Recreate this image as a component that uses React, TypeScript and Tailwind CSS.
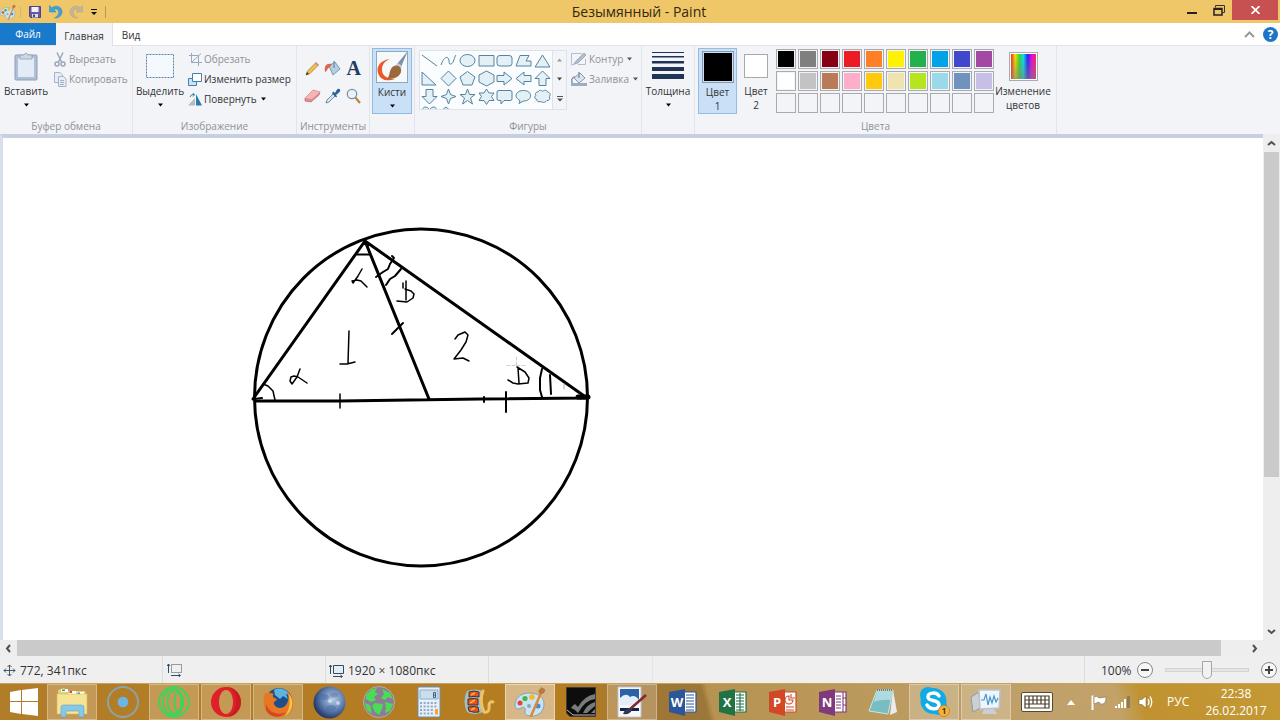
import React, { useState } from 'react'

const palette = [
  '#000000', '#7f7f7f', '#880015', '#ed1c24', '#ff7f27', '#fff200', '#22b14c', '#00a2e8', '#3f48cc', '#a349a4',
  '#ffffff', '#c3c3c3', '#b97a57', '#ffaec9', '#ffc90e', '#efe4b0', '#b5e61d', '#99d9ea', '#7092be', '#c8bfe7',
  '', '', '', '', '', '', '', '', '', '',
]

// 19x19 outlines of the shape gallery
const shapes = [
  { name: 'Линия', d: 'M2 4L17 15' },
  { name: 'Кривая', d: 'M2 14C4 8 7 5 9 7C11 9 9 14 12 13C15 12 15 6 17 4' },
  { name: 'Овал', d: 'M2 9.5a7.5 6 0 1 0 15 0a7.5 6 0 1 0 -15 0Z' },
  { name: 'Прямоугольник', d: 'M2 4.5H17V15H2Z' },
  { name: 'Скругленный прямоугольник', d: 'M5 4.5H14Q17 4.5 17 7V12.500Q17 15 14 15H5Q2 15 2 12.500V7Q2 4.500 5 4.500Z' },
  { name: 'Многоугольник', d: 'M6 4.500H15L12 10H17V15H2Z' },
  { name: 'Треугольник', d: 'M9.500 4L17 16H2Z' },
  { name: 'Прямоугольный треугольник', d: 'M2 3V16H16Z' },
  { name: 'Ромб', d: 'M9.500 2L17 9.500L9.500 17L2 9.500Z' },
  { name: 'Пятиугольник', d: 'M9.500 2.500L17 8L14 16H5L2 8Z' },
  { name: 'Шестиугольник', d: 'M9.500 2L17 6V13L9.500 17L2 13V6Z' },
  { name: 'Стрелка вправо', d: 'M2 6.500H9V3L17 9.500L9 16V12.500H2Z' },
  { name: 'Стрелка влево', d: 'M17 6.500H10V3L2 9.500L10 16V12.500H17Z' },
  { name: 'Стрелка вверх', d: 'M9.500 2L17 9.500H13V16.500H6V9.500H2Z' },
  { name: 'Стрелка вниз', d: 'M9.500 17L17 9.500H13V2.500H6V9.500H2Z' },
  { name: 'Четырехконечная звезда', d: 'M9.500 2L11.500 7.500L17 9.500L11.500 11.500L9.500 17L7.500 11.500L2 9.500L7.500 7.500Z' },
  { name: 'Пятиконечная звезда', d: 'M9.500 2L11.500 7.500H17L12.500 11L14.500 17L9.500 13.500L4.500 17L6.500 11L2 7.500H7.500Z' },
  { name: 'Шестиконечная звезда', d: 'M9.500 2L12 6H17L14.500 9.500L17 13.500H12L9.500 17.500L7 13.500H2L4.500 9.500L2 6H7Z' },
  { name: 'Выноска', d: 'M4 3.500H15Q17 3.500 17 5V12Q17 13.500 15 13.500H9L6 17V13.500H4Q2 13.500 2 12V5Q2 3.500 4 3.500Z' },
  { name: 'Овальная выноска', d: 'M9.500 3.500C19 3.500 19 14 9.500 14L5 16.500L6 13.500C-1 10 2 3.500 9.500 3.500Z' },
  { name: 'Выноска-облако', d: 'M5 5C6 2.500 9 3 9.500 4.500C11 2.500 14 3 14.500 5C17.500 5.500 17.500 8 16.500 9.500C17.500 12 16 14 14 13.500C12 16 9 15.500 8 14.500C5 15.500 3.500 14 4 12.500C1 12 1.500 9 3 8.500C1.500 6.500 3 5 5 5Z' },
  { name: 'Сердце', d: 'M9.500 5C7 0 2 2 2 6C2 11 9.500 17 9.500 17S17 11 17 6C17 2 12 0 9.500 5Z' },
  { name: 'Молния', d: 'M7 2L13 7L11 8L17 17L8 11L10 10L2 6Z' },
]

function Caret({ className = 'fill-black' }: { className?: string }) {
  return (
    <svg className={className} width="5" height="4" viewBox="0 0 5 4"><path d="M0 0.500H5L2.500 3.500Z" /></svg>
  )
}

function Group({ label, className, children }: { label: string; className: string; children: React.ReactNode }) {
  return (
    <section aria-label={label} className={`flex shrink-0 flex-col border-r border-[#e2e5ea] ${className}`}>
      <div className="flex h-[73px] pt-[2px]">{children}</div>
      <div className="text-center leading-4 text-[#8f9296]">{label}</div>
    </section>
  )
}

interface BigProps {
  icon: React.ReactNode
  text: string
  second?: string
  className: string
}

function BigButton({ icon, text, second, className }: BigProps) {
  return (
    <button className={`flex h-[66px] shrink-0 flex-col items-center whitespace-nowrap leading-[14px] ${className}`}>
      <span className="flex h-9 items-center justify-center">{icon}</span>
      <span>{text}</span>
      <span className="flex h-[14px] items-center">{second ? second : <Caret />}</span>
    </button>
  )
}

function SmallButton({ icon, text, caret, disabled }: { icon: React.ReactNode; text: string; caret?: boolean; disabled?: boolean }) {
  return (
    <button
      disabled={disabled}
      className={disabled ? 'flex h-5 items-center gap-[2px] whitespace-nowrap text-[#8f9296]' : 'flex h-5 items-center gap-[2px] whitespace-nowrap'}
    >
      {icon}
      <span>{text}</span>
      {caret && <Caret className={disabled ? 'ml-[2px] fill-[#50545a]' : 'ml-[2px] fill-black'} />}
    </button>
  )
}

function PaletteIcon({ size }: { size: number }) {
  return (
    <svg width={size} height={size} viewBox="0 0 32 32">
      <path d="M15 7C6 7 1 13 1 19C1 23 4 24 7 22C10 20 12 22 11 25C10 29 14 30 18 30C25 30 30 25 30 18C30 11 24 7 15 7Z" fill="#c9e3f0" stroke="#7da6ba" />
      <circle cx="6" cy="17" r="2.500" fill="#e0453c" />
      <circle cx="11" cy="12.500" r="2.600" fill="#45b64b" />
      <circle cx="18" cy="11" r="2.800" fill="#f6b826" />
      <circle cx="15" cy="20" r="2" fill="#8aa7b5" />
      <circle cx="24" cy="20" r="2.500" fill="#4c86d6" />
      <path d="M27 7L17 30" stroke="#d88a3c" strokeWidth="2.500" strokeLinecap="round" />
      <path d="M25 7C23 3 27 4 27 1C29 3 32 2 31 5C30 8 28 9 25 7Z" fill="#b77b42" />
    </svg>
  )
}

function TitleBar() {
  return (
    <header className="flex h-[23px] shrink-0 bg-[#efc768]">
      <div className="flex flex-1 items-center">
        <PaletteIcon size={16} />
        <span className="ml-1 mr-2 h-3 w-px bg-[#d3b774]"></span>
        <button aria-label="Сохранить" className="mr-2">
          <svg width="12" height="12" viewBox="0 0 12 12">
            <path d="M0.500 0.500H11.500V11.500H1.500L0.500 10.500Z" fill="#6a58a5" stroke="#51418a" />
            <path d="M2.500 1H9.500V6H2.500Z" fill="#f4f3fa" />
            <path d="M3 8H9V11.500H3Z" fill="#ddd" />
            <path d="M4 8.500H6V11H4Z" fill="#51418a" />
          </svg>
        </button>
        <button aria-label="Отменить" className="mr-[6px]">
          <svg width="14" height="14" viewBox="0 0 14 14">
            <path d="M0.500 0.500V7H7L4.800 4.800C8 2.800 10.500 5.500 9.500 8.500C9 10.500 7.500 12 5.500 13C10 13.500 13.500 10 13 6C12.400 1.500 7 -0.500 2.800 2.800Z" fill="#3ea3d6" stroke="#2b87bd" strokeWidth=".5" />
          </svg>
        </button>
        <button aria-label="Вернуть" className="mr-2">
          <svg width="14" height="14" viewBox="0 0 14 14">
            <path d="M13.500 0.500V7H7L9.200 4.800C6 2.800 3.500 5.500 4.500 8.500C5 10.500 6.500 12 8.500 13C4 13.500 0.500 10 1 6C1.600 1.500 7 -0.500 11.200 2.800Z" fill="#c3b596" stroke="#aaa18c" strokeWidth=".5" />
          </svg>
        </button>
        <button aria-label="Настройка панели" className="mr-2">
          <svg width="6" height="6" viewBox="0 0 6 6"><path d="M0 0H6V1H0ZM0 3H6L3 6Z" fill="#111" /></svg>
        </button>
        <span className="h-3 w-px bg-[#b59a5c]"></span>
      </div>
      <h1 className="text-[14px] leading-6 text-[#33290f]">Безымянный - Paint</h1>
      <div className="flex flex-1 items-start justify-end pr-[2px]">
        <button aria-label="Свернуть" className="flex h-5 w-[26px] items-center justify-center">
          <svg width="10" height="10" viewBox="0 0 10 10"><path d="M0 7H10V9H0Z" fill="#222" /></svg>
        </button>
        <button aria-label="Развернуть" className="flex h-5 w-[27px] items-center justify-center">
          <svg width="12" height="11" viewBox="0 0 12 11">
            <path d="M2.500 2.500V0.500H11.500V7.500H9.500" fill="none" stroke="#333" />
            <path d="M1 3.500H9V10H1Z" fill="none" stroke="#222" strokeWidth="1.500" />
            <path d="M1 3H9V5H1Z" fill="#222" />
          </svg>
        </button>
        <button aria-label="Закрыть" className="flex h-5 w-[46px] items-center justify-center bg-[#c75050]">
          <svg width="9" height="8" viewBox="0 0 9 8"><path d="M0.500 0L8.500 8M8.500 0L0.500 8" stroke="#fff" strokeWidth="1.700" /></svg>
        </button>
      </div>
    </header>
  )
}

function Tabs() {
  return (
    <nav className="flex h-[22px] shrink-0 bg-white text-[10px] text-[#333]">
      <button className="w-14 bg-[#1979ca] text-white">Файл</button>
      <button className="z-10 -mb-px w-[57px] border-r border-[#dfe2e7] bg-[#f2f4f8] pt-[3px]">Главная</button>
      <button className="w-9 pt-[3px]">Вид</button>
      <div className="flex flex-1 items-center justify-end gap-2 pr-[2px]">
        <button aria-label="Свернуть ленту">
          <svg width="11" height="7" viewBox="0 0 11 7"><path d="M1 6L5.500 1.500L10 6" fill="none" stroke="#999" strokeWidth="2" /></svg>
        </button>
        <button aria-label="Справка" className="size-[15px] rounded-full bg-[#1c75c8] text-[12px] font-bold leading-[15px] text-white">?</button>
      </div>
    </nav>
  )
}

function Ribbon() {
  const [color, setColor] = useState('#000000')

  return (
    <div className="flex h-[89px] shrink-0 overflow-hidden border-t border-[#e0e3e8] bg-[#f2f4f8] text-[10px] text-[#333]">
      <Group label="Буфер обмена" className="w-[133px]">
        <BigButton
          className="ml-1 w-11"
          text="Вставить"
          icon={
            <svg width="24" height="29" viewBox="0 0 24 29">
              <rect x="1" y="3" width="22" height="25" rx="1" fill="#b1bfd6" stroke="#8f9fba" />
              <path d="M4 6H20V25H4Z" fill="#e3ebf6" />
              <path d="M6 3H10Q12 -1 14 3H18V7H6Z" fill="#d0d7e2" stroke="#8f9fba" strokeWidth=".8" />
            </svg>
          }
        />
        <div className="ml-[5px] pt-px">
          <SmallButton
            disabled
            text="Вырезать"
            icon={
              <svg width="14" height="15" viewBox="0 0 14 15" fill="none" stroke="#9aa5b7" strokeWidth="1.400">
                <path d="M4 0.500L8.500 10M10 0.500L5.500 10" /><circle cx="4" cy="12" r="2" /><circle cx="10" cy="12" r="2" />
              </svg>
            }
          />
          <SmallButton
            disabled
            text="Копировать"
            icon={
              <svg width="14" height="15" viewBox="0 0 14 15" fill="#e6edf8" stroke="#a5b3ca">
                <path d="M1.500 0.500H7L9.500 3V10.500H1.500Z" /><path d="M5.500 4.500H10.500L13 7V14.500H5.500Z" /><path d="M7 8.500H11M7 10.500H11M7 12.500H11" />
              </svg>
            }
          />
        </div>
      </Group>

      <Group label="Изображение" className="w-[164px]">
        <BigButton
          className="ml-1 w-[46px]"
          text="Выделить"
          icon={
            <svg width="28" height="24" viewBox="0 0 28 24"><rect x="0.500" y="0.500" width="27" height="23" fill="#f5f8fc" stroke="#5783a8" strokeDasharray="2 1" /></svg>
          }
        />
        <div className="ml-[5px] pt-px">
          <SmallButton
            disabled
            text="Обрезать"
            icon={
              <svg width="14" height="13" viewBox="0 0 14 13" fill="none" stroke="#9ba9bd"><path d="M3.500 0V9.500H14M1 2.500H10.500V13M3.500 9.500L13 0.500" /></svg>
            }
          />
          <SmallButton
            text="Изменить размер"
            icon={
              <svg width="14" height="13" viewBox="0 0 14 13"><path d="M0.500 5.500H8.500V12.500H0.500Z" fill="#cce2f1" stroke="#3e83ad" /><path d="M4.500 0.500H13.500V8.500H4.500Z" fill="#fff" stroke="#3e83ad" /></svg>
            }
          />
          <SmallButton
            text="Повернуть"
            caret
            icon={
              <svg width="14" height="13" viewBox="0 0 14 13"><path d="M0 12.500L7 5V12.500Z" fill="#b5bbc2" /><path d="M8 1V12.500H14Z" fill="#287cae" /><path d="M2 4Q3 1 6 1.500M4.500 0L6.500 1.500L5 3.500" fill="none" stroke="#287cae" /></svg>
            }
          />
        </div>
      </Group>

      <Group label="Инструменты" className="w-[73px]">
        <div className="ml-[5px] grid h-14 w-[62px] grid-cols-3 place-items-center">
          <button aria-label="Карандаш" className="pt-[10px]">
            <svg width="15" height="15" viewBox="0 0 15 15"><path d="M1 14L2.500 10L11 1.500L13.500 4L5 12.500Z" fill="#edc34f" stroke="#9b7730" strokeWidth=".7" /><path d="M11 1.500L13.500 4L12.500 5L10 2.500Z" fill="#d78688" /><path d="M1 14L2 11L4 13Z" fill="#333" /></svg>
          </button>
          <button aria-label="Заливка цветом" className="pt-[10px]">
            <svg width="17" height="16" viewBox="0 0 17 16"><path d="M5 6L11 2L16 9L9 15Z" fill="#b7d0e1" stroke="#6188a4" strokeWidth=".8" /><path d="M10 1V8" stroke="#517c9c" /><path d="M8 4C2 3 0 6 1 12C3 12 3 8 6 7Z" fill="#dd6747" /></svg>
          </button>
          <button aria-label="Текст" className="pt-[10px] font-['Liberation_Serif',serif] text-[20px] font-bold leading-5 text-[#1f3b61]">A</button>
          <button aria-label="Ластик" className="pt-[10px]">
            <svg width="17" height="14" viewBox="0 0 17 14"><path d="M1 9L9 1L16 3L15 6L7 13L1 12Z" fill="#dd8d8e" stroke="#b46c70" strokeWidth=".7" /><path d="M1 9L9 1L16 3L8 10Z" fill="#f5b5b2" /></svg>
          </button>
          <button aria-label="Палитра" className="pt-[10px]">
            <svg width="16" height="16" viewBox="0 0 16 16"><path d="M1 15L2 12L8 6L10 8L4 14Z" fill="#d7e7f2" stroke="#54738d" strokeWidth=".8" /><path d="M7 5L8.500 3.500L10 5L12 1.500Q14 0 15 1.500Q16 3 14 4.500L11 7L12 8.500L11 9.500Z" fill="#28629b" /></svg>
          </button>
          <button aria-label="Масштаб" className="pt-[10px]">
            <svg width="15" height="16" viewBox="0 0 15 16"><path d="M9 9L14 15" stroke="#b7863f" strokeWidth="2.200" /><circle cx="6" cy="6" r="4.700" fill="#e9f3fa" stroke="#7e8fa1" strokeWidth="1.300" /></svg>
          </button>
        </div>
      </Group>

      <section className="w-[45px] shrink-0 border-r border-[#e2e5ea] pl-[2px] pt-[2px]">
        <BigButton
          className="w-10 border border-[#8fbbe4] bg-[#c9e0f7]"
          text="Кисти"
          icon={
            <svg width="32" height="32" viewBox="0 0 32 32">
              <rect x="0.500" y="0.500" width="31" height="31" fill="#f7f8fa" stroke="#8ea8c1" />
              <path d="M14 8C5 9 0 15 2 22C4 29 11 31 19 28C12 28 6 25 6 19C6 13 9 10 14 8Z" fill="#e9592a" />
              <path d="M31 2L25 16L21 13L31 1Z" fill="#7b93ad" />
              <path d="M22 12L26 15L24 19L19 15Z" fill="#c3ccd4" />
              <path d="M15 18C18 13 24 14 25 18C26 23 22 28 11 28C14 25 13 21 15 18Z" fill="#9a6a3a" />
            </svg>
          }
        />
      </section>

      <Group label="Фигуры" className="w-[227px]">
        <div className="ml-1 mt-[2px] grid h-[60px] w-[134px] shrink-0 auto-rows-[18px] grid-cols-7 overflow-hidden border border-[#dde3ea] bg-[#fafcfe]">
          {shapes.map((s) => (
            <button key={s.name} aria-label={s.name}>
              <svg width="19" height="19" viewBox="0 0 19 19"><path d={s.d} fill={s.name === 'Кривая' ? 'none' : '#e3f1f7'} stroke="#5583a0" /></svg>
            </button>
          ))}
        </div>
        <div className="mt-[2px] flex h-[60px] w-[14px] flex-col items-center justify-around border border-l-0 border-[#dde3ea]">
          <svg width="5" height="4" viewBox="0 0 5 4"><path d="M0 3.500H5L2.500 0.500Z" fill="#999" /></svg>
          <Caret className="fill-[#444]" />
          <svg width="6" height="6" viewBox="0 0 6 6"><path d="M0 0H6V1H0ZM0 2.500H6L3 5.500Z" fill="#555" /></svg>
        </div>
        <div className="ml-1 pt-px">
          <SmallButton
            disabled
            text="Контур"
            caret
            icon={
              <svg width="16" height="14" viewBox="0 0 16 14"><path d="M11 1.500H0.500V13L4 12M14.500 7V12.500H7" fill="none" stroke="#b2bfd2" /><path d="M3 12L5 9L13 1L15 3L7 11Z" fill="#b4c0d2" stroke="#8796ad" strokeWidth=".7" /></svg>
            }
          />
          <SmallButton
            disabled
            text="Заливка"
            caret
            icon={
              <svg width="16" height="14" viewBox="0 0 16 14"><path d="M0 11H16V14H0Z" fill="#9eacc3" /><path d="M3 6L9 1L14 6L8 11Z" fill="#dbe3ef" stroke="#8796ad" /><path d="M8 0V6M4 5Q0 5 1 11" fill="none" stroke="#8796ad" strokeWidth="1.500" /></svg>
            }
          />
        </div>
      </Group>

      <section className="flex w-[53px] shrink-0 justify-center border-r border-[#e2e5ea] pt-[2px]">
        <BigButton
          className="w-11"
          text="Толщина"
          icon={
            <svg width="32" height="28" viewBox="0 0 32 28"><path d="M0 0H32V1H0ZM0 4H32V5.500H0ZM0 9H32V11.500H0ZM0 15H32V19H0ZM0 22H32V27H0Z" fill="#203556" /></svg>
          }
        />
      </section>

      <Group label="Цвета" className="w-[362px]">
        <BigButton
          className="ml-[3px] w-[39px] border border-[#94bde5] bg-[#c9e0f7]"
          text="Цвет"
          second="1"
          icon={<span className="size-8 border border-[#8b97a5] p-px"><span className="block size-7" style={{ backgroundColor: color }}></span></span>}
        />
        <BigButton
          className="w-[38px]"
          text="Цвет"
          second="2"
          icon={<span className="size-6 border border-[#a8a8a8] bg-white"></span>}
        />
        <div className="ml-px grid shrink-0 grid-cols-10 content-start gap-[2px] pt-px">
          {palette.map((c, i) => (
            <button
              key={i}
              aria-label={`Цвет ${i + 1}`}
              onClick={() => c && setColor(c)}
              className="size-5 border border-[#a9abae] p-px"
            >
              <span className="block h-full" style={{ backgroundColor: c || 'transparent' }}></span>
            </button>
          ))}
        </div>
        <BigButton
          className="w-[58px]"
          text="Изменение"
          second="цветов"
          icon={
            <span className="size-[29px] border border-[#aaa] bg-white p-px">
              <span className="block h-full bg-[linear-gradient(to_top,#80808099,transparent),linear-gradient(to_right,#f22,#fd0,#3d2,#0df,#22e,#e0e,#f24)]"></span>
            </span>
          }
        />
      </Group>
    </div>
  )
}

function Drawing() {
  return (
    <svg className="block h-full w-full" role="img" aria-label="Окружность с вписанным треугольником">
      <g transform="translate(-3 -138)" fill="none" stroke="#000" strokeWidth="1.500" strokeLinecap="round" strokeLinejoin="round">
        <ellipse cx="421" cy="397.500" rx="166.500" ry="168.500" strokeWidth="3" />
        <path strokeWidth="3" d="M253 399L365 241L587 398M365 241L429 399M256 401L340 401L480 399L587 398" />
        <path strokeWidth="5" d="M578 397L588 397" />
        <path strokeWidth="2" d="M253 399L262 398M357 254.500H370" />
        <path d="M362 269L358 276L353 283L352 281L357 280L361 281L367 287" />
        <path strokeWidth="2" d="M392 256L394 258L390 264L388 269L383 272L376 277M401 269L395 276L390 279L386 285" />
        <path d="M403 283V288M406 281L406 300M397 301L407 302L413 298L414 294L411 291L405 289" />
        <path strokeWidth="2" d="M403 323L392 334" />
        <path d="M349 331L348 363M340 364L347 364L355 362" />
        <path d="M300 369L297 377L292 384L290 381L291 377L294 376L298 377L307 383" />
        <path d="M263 384L268 386L273 391L275 400M340 394V408" />
        <path d="M455 339L458 335L465 332L468 335L466 342L461 350L454 359L463 358L469 361" />
        <path d="M518 368L519 383M517 367L525 372L529 378L528 383L518 384L513 383L508 380" />
        <path strokeWidth="2" d="M542 369L540 378L540 390L542 397M550 375L551 394M484 397V402M506 392V412" />
        <path strokeWidth="1" stroke="#aaa" d="M564 384V389" />
        <path strokeWidth="1" stroke="#ccc" strokeDasharray="3 2" d="M507 365.500H527M516.500 357V366" />
      </g>
    </svg>
  )
}

function Chevron({ d }: { d: string }) {
  return (
    <svg width="9" height="9" viewBox="0 0 9 9"><path d={d} fill="none" stroke="#505050" strokeWidth="2" /></svg>
  )
}

function Workspace() {
  return (
    <div className="flex min-h-0 flex-1">
      <main className="flex min-w-0 flex-1 flex-col">
        <div className="min-h-0 flex-1 border-l-[3px] border-t-4 border-l-[#d7dfec] border-t-[#c8d0df] bg-white">
          <Drawing />
        </div>
        <div className="flex h-4 bg-[#eee]">
          <button aria-label="Влево" className="flex w-[17px] items-center justify-center"><Chevron d="M6 1L3 4.500L6 8" /></button>
          <div className="flex flex-1"><div className="w-[98%] bg-[#cacaca]"></div></div>
          <button aria-label="Вправо" className="flex w-[17px] items-center justify-center"><Chevron d="M3 1L6 4.500L3 8" /></button>
        </div>
      </main>
      <div className="flex w-[17px] flex-col bg-[#eee] pb-4">
        <button aria-label="Вверх" className="flex h-[18px] items-center justify-center"><Chevron d="M1 6L4.500 3L8 6" /></button>
        <div className="flex-1 px-px"><div className="h-[69%] bg-[#cacaca]"></div></div>
        <button aria-label="Вниз" className="flex h-[17px] items-center justify-center"><Chevron d="M1 3L4.500 6L8 3" /></button>
      </div>
    </div>
  )
}

function StatusBar() {
  const [zoom, setZoom] = useState(50)

  return (
    <footer className="flex h-[27px] shrink-0 bg-[#efefef] text-[12px] text-[#333]">
      <div className="flex w-[163px] items-center gap-1 border-r border-[#ddd] pl-[3px] pt-[2px]">
        <svg width="13" height="13" viewBox="0 0 13 13" fill="none" stroke="#44586b"><path d="M6.500 1V12M1 6.500H12M4.500 3L6.500 1L8.500 3M4.500 10L6.500 12L8.500 10M3 4.500L1 6.500L3 8.500M10 4.500L12 6.500L10 8.500" /></svg>
        <span>772, 341пкс</span>
      </div>
      <div className="flex w-[163px] items-center border-r border-[#ddd] pl-1">
        <svg width="15" height="14" viewBox="0 0 15 14" fill="none" stroke="#354a63"><path d="M1.500 1V10M0 3L1.500 1L3 3M4 12.500H13M11.500 11L13.500 12.500L11.500 14" /><path strokeDasharray="1 1" d="M4.500 1.500H14.500V9.500H4.500Z" /></svg>
      </div>
      <div className="flex w-[163px] items-center gap-1 border-r border-[#ddd] pl-[3px] pt-[2px]">
        <svg width="15" height="14" viewBox="0 0 15 14" fill="none" stroke="#354a63"><path d="M1.500 1V10M0 3L1.500 1L3 3M4 12.500H13M11.500 11L13.500 12.500L11.500 14" /><path fill="#e3edf7" d="M4.500 1.500H14.500V9.500H4.500Z" /></svg>
        <span>1920 × 1080пкс</span>
      </div>
      <div className="w-[164px] border-r border-[#e4e4e4]"></div>
      <div className="flex-1"></div>
      <div className="flex w-[196px] items-center border-l border-[#ddd] pl-4">
        <label htmlFor="zoom" className="w-9 pt-[2px]">100%</label>
        <button aria-label="Уменьшить" onClick={() => setZoom(Math.max(0, zoom - 10))} className="flex size-4 items-center justify-center rounded-full border border-[#888] bg-[#f7f7f7]">
          <svg width="8" height="8" viewBox="0 0 8 8"><path d="M0 4H8" stroke="#444" strokeWidth="2" /></svg>
        </button>
        <input
          id="zoom"
          type="range"
          value={zoom}
          onChange={(e) => setZoom(Number(e.target.value))}
          className="mx-3 h-1 w-[84px] appearance-none border border-[#d3d3d3] bg-[#e6e6e6] [&::-webkit-slider-thumb]:h-[18px] [&::-webkit-slider-thumb]:w-[10px] [&::-webkit-slider-thumb]:appearance-none [&::-webkit-slider-thumb]:rounded-b-md [&::-webkit-slider-thumb]:border [&::-webkit-slider-thumb]:border-[#a5a5a5] [&::-webkit-slider-thumb]:bg-[#f2f2f2]"
        />
        <button aria-label="Увеличить" onClick={() => setZoom(Math.min(100, zoom + 10))} className="flex size-4 items-center justify-center rounded-full border border-[#888] bg-[#f7f7f7]">
          <svg width="8" height="8" viewBox="0 0 8 8"><path d="M0 4H8M4 0V8" stroke="#444" strokeWidth="2" /></svg>
        </button>
      </div>
    </footer>
  )
}

function OfficeIcon({ letter, color, d }: { letter: string; color: string; d: string }) {
  return (
    <svg width="30" height="30" viewBox="0 0 30 30">
      <path d="M15 5H28V25H15Z" fill="#fff" stroke={color} strokeWidth="1.200" />
      <path d={d} fill="none" stroke={color} strokeWidth="1.100" />
      <path d="M1 5L17 2V29L1 25Z" fill={color} />
      <text x="9" y="20" textAnchor="middle" fontSize="13" fontWeight="700" fill="#fff">{letter}</text>
    </svg>
  )
}

const apps = [
  {
    name: 'Проводник',
    open: true,
    icon: (
      <svg width="32" height="32" viewBox="0 0 32 32">
        <path d="M2 4L8 2L11 5H29L30 9V26H2Z" fill="#e6cf76" />
        <path d="M5 3H12V6H5ZM13 5H20V8H13ZM21 6H28V9H21Z" fill="#fff" />
        <path d="M6 3.500H9V5H6Z" fill="#3b9b4c" /><path d="M13.500 5H16V7H13.500Z" fill="#d84a3a" /><path d="M21.500 6.500H24V8H21.500Z" fill="#3d7fc4" />
        <path d="M1 8H31V28H1Z" fill="#f4e494" stroke="#d6bd5c" strokeWidth=".6" />
        <path d="M5 31V21Q5 19 8 19H25Q28 19 28 21V31H23V25H10V31Z" fill="#87c7e8" stroke="#5ba6cf" strokeWidth=".6" />
      </svg>
    ),
  },
  {
    name: 'Запись',
    icon: (
      <svg width="34" height="34" viewBox="0 0 34 34"><circle cx="17" cy="17" r="15" fill="none" stroke="#88a5ac" strokeWidth="2" /><circle cx="17" cy="17" r="5.300" fill="#6cb5e4" /></svg>
    ),
  },
  {
    name: 'Браузер',
    open: true,
    icon: (
      <svg width="32" height="32" viewBox="0 0 32 32" fill="none" stroke="#2edb5b" strokeWidth="1.700"><circle cx="16" cy="16" r="14.800" /><ellipse cx="15" cy="16" rx="10" ry="13" /><ellipse cx="17" cy="16" rx="7.500" ry="12" /><ellipse cx="20" cy="16" rx="3.500" ry="10" /></svg>
    ),
  },
  {
    name: 'Opera',
    open: true,
    icon: (
      <svg width="32" height="32" viewBox="0 0 32 32"><path fillRule="evenodd" d="M16 1A15 15 0 1 0 16 31A15 15 0 1 0 16 1ZM16 4C21 4 23 11 23 16S21 28 16 28S9 21 9 16S11 4 16 4Z" fill="#e02029" /><path d="M17 1C24 2 26 9 26 16S23 28 17 31C26 31 31 24 31 16S25 1 17 1Z" fill="#b31520" opacity=".5" /></svg>
    ),
  },
  {
    name: 'Firefox',
    open: true,
    icon: (
      <svg width="31" height="31" viewBox="0 0 31 31">
        <circle cx="16" cy="14" r="13" fill="#1d4f8c" />
        <path d="M11 3C16 0 24 2 27 8L23 7L25 12L20 9L17 12L12 8Z" fill="#5fb4dd" />
        <path d="M2 6C5 7 7 5 11 7C8 9 11 11 14 12C13 15 10 14 11 17C13 22 20 22 23 18C26 14 26 9 24 5C30 9 32 17 28 24C23 32 10 32 4 25C0 20 0 12 2 6Z" fill="#e77722" />
        <path d="M25 6C32 13 30 24 22 29C27 22 28 13 25 6Z" fill="#f5c642" />
        <path d="M3 17C6 26 15 29 23 25C18 32 7 31 3 23Z" fill="#d64620" />
      </svg>
    ),
  },
  {
    name: 'Луна',
    icon: (
      <svg width="33" height="33" viewBox="0 0 33 33">
        <defs><radialGradient id="moon" cx=".6" cy=".4" r=".65"><stop offset="0" stopColor="#b8cbe4" /><stop offset=".5" stopColor="#6685b6" /><stop offset="1" stopColor="#172d60" /></radialGradient></defs>
        <circle cx="16.500" cy="16.500" r="16" fill="url(#moon)" />
        <ellipse cx="11" cy="11" rx="5" ry="3" fill="#49699e" opacity=".5" />
        <ellipse cx="21" cy="9" rx="4" ry="2.500" fill="#49699e" opacity=".4" />
        <ellipse cx="18" cy="22" rx="5" ry="3" fill="#49699e" opacity=".5" />
        <circle cx="17" cy="15" r="2" fill="#dce7f3" opacity=".7" /><circle cx="25" cy="17" r="2" fill="#dce7f3" opacity=".7" />
      </svg>
    ),
  },
  {
    name: 'Глобус',
    icon: (
      <svg width="32" height="32" viewBox="0 0 32 32">
        <circle cx="16" cy="16" r="15.500" fill="#8e7b94" stroke="#a8b2a4" />
        <path d="M3 9L9 3L14 2L12 6L15 8L11 11L13 14L8 16L3 13ZM19 3L27 7L30 13L25 11L22 14L18 12L21 8ZM12 17L20 18L19 23L16 29L12 26L9 20ZM22 16L30 18L27 25L22 27L23 22ZM2 17L7 19L9 28L4 24Z" fill="#48dc57" />
      </svg>
    ),
  },
  {
    name: 'Калькулятор',
    icon: (
      <svg width="24" height="32" viewBox="0 0 24 32">
        <rect x="1" y="1" width="22" height="30" rx="1" fill="#e7f0f8" stroke="#6a92b5" />
        <path d="M3 4H21V13H3Z" fill="#c9deee" stroke="#7d9fbb" strokeWidth=".8" /><path d="M16.500 6.500H18.500V11.500H16.500ZM16.500 9H18.500" fill="none" stroke="#264663" strokeWidth=".8" />
        <path d="M3 17H21M3 20.500H21M3 24H17M3 27.500H17" stroke="#8dabc6" strokeWidth="1.800" strokeDasharray="2 1.600" /><path d="M18 23H21V28.500H18Z" fill="#f3a731" />
      </svg>
    ),
  },
  {
    name: 'Видео',
    icon: (
      <svg width="32" height="28" viewBox="0 0 32 28">
        <path d="M4 3Q11 0 20 3Q16 13 20 24Q11 28 4 24Q-1 13 4 3Z" fill="#9fc0cd" />
        <path d="M6 4Q11 2 16 4V9Q11 8 6 9ZM5 11Q10 10 15 11V17H5ZM5 19Q10 18 15 19L16 24Q11 25 6 23Z" fill="#e8501c" stroke="#43352c" />
        <path d="M8 7L12 5M7 15L12 12M8 22L12 20" stroke="#ffb43e" strokeWidth="1.500" />
        <path d="M20 3Q16 13 21 24Q27 25 26 18Q26 13 30 14" fill="none" stroke="#f0c266" strokeWidth="3" strokeLinecap="round" />
      </svg>
    ),
  },
  { name: 'Paint', open: true, active: true, icon: <PaletteIcon size={32} /> },
  {
    name: 'Графика',
    icon: (
      <svg width="30" height="30" viewBox="0 0 30 30">
        <path d="M0.500 0.500H29.500V29.500H4L0.500 26Z" fill="#0d0d0d" stroke="#3b3b3b" />
        <path d="M29 7Q18 9 12 20L9 17Q7 18 5 21Q9 22 12 26Q19 13 29 12ZM29 15Q21 17 17 26H21L29 19ZM29 22L25 26H29Z" fill="#777b7c" />
        <path d="M1 23L7 28H29" fill="none" stroke="#bbb" />
      </svg>
    ),
  },
  {
    name: 'Изображения',
    open: true,
    icon: (
      <svg width="30" height="32" viewBox="0 0 30 32">
        <path d="M1 1H24V31H1Z" fill="#f5f7fb" stroke="#c0c5d0" /><path d="M3 3H22V19H3Z" fill="#2b61a9" />
        <path d="M3 12Q9 6 13 11Q18 8 22 14V19H3Z" fill="#e4eef8" /><path d="M3 22H22V25H3Z" fill="#16254a" />
        <path d="M29 9L12 24" stroke="#812632" strokeWidth="2.500" /><path d="M13 22Q8 22 6 28Q13 29 15 24Z" fill="#333850" />
      </svg>
    ),
  },
  { name: 'Word', icon: <OfficeIcon letter="W" color="#2b579a" d="M18 8H26M18 11H26M18 14H26M18 17H26M18 20H26M18 23H26" /> },
  { name: 'Excel', icon: <OfficeIcon letter="X" color="#217346" d="M18 8H26M18 11H26M18 14H26M18 17H26M18 20H26M18 23H26M22 6V24" /> },
  { name: 'PowerPoint', icon: <OfficeIcon letter="P" color="#d24726" d="M21 9A4 4 0 1 0 25 13H21ZM23 7V11H27M18 20H26M18 23H26" /> },
  { name: 'OneNote', icon: <OfficeIcon letter="N" color="#80397b" d="M18 9H23M18 12H23M18 15H23M18 18H23M18 21H23M25 5V25M25 11H28M25 18H28" /> },
  {
    name: 'Блокнот',
    icon: (
      <svg width="30" height="30" viewBox="0 0 30 30"><path d="M25 3L29 25L22 28Z" fill="#e9edf0" /><path d="M9 3H25L20 27L1 24Z" fill="#77bdc1" stroke="#c9e6e8" /><path d="M9 3H25L23 13Q13 12 6 15Z" fill="#aedbdf" /><path d="M9 3H25" stroke="#777" strokeWidth="2" strokeDasharray="1 1" /></svg>
    ),
  },
  {
    name: 'Skype',
    open: true,
    icon: (
      <svg width="31" height="32" viewBox="0 0 31 32">
        <circle cx="9" cy="9" r="8" fill="#10abe6" /><circle cx="20" cy="21" r="8" fill="#10abe6" /><circle cx="14.500" cy="15" r="13" fill="#10abe6" />
        <path d="M20 10C18 6 9 6 9 11C9 16 20 13 20 19C20 24 11 24 8 19" fill="none" stroke="#fff" strokeWidth="3.500" strokeLinecap="round" />
        <circle cx="25" cy="25" r="5.500" fill="#f4b33d" stroke="#cf8b25" /><text x="25" y="28" fontSize="8" fontWeight="700" textAnchor="middle" fill="#4a3210">1</text>
      </svg>
    ),
  },
  {
    name: 'Монитор ресурсов',
    open: true,
    icon: (
      <svg width="32" height="28" viewBox="0 0 32 28">
        <path d="M1 9L9 4L10 20L3 24Z" fill="#cbd0d5" stroke="#90989f" /><path d="M14 21H24L27 26H12Z" fill="#c9cfd4" />
        <path d="M9 2H30L29 20L10 21Z" fill="#eff6fb" stroke="#b9c6d0" strokeWidth="1.500" /><path d="M11 12H14L16 6L18 17L20 9L22 15L24 8L26 14L28 10" fill="none" stroke="#4696cf" strokeWidth="1.200" />
      </svg>
    ),
  },
]

function Taskbar() {
  return (
    <div className="flex h-[37px] shrink-0 overflow-hidden border-t border-[#c9a25d] bg-[linear-gradient(75deg,#b27d29_0%,#b57d20_44%,#a07635_51%,#9b7738_55%,#b69351_55.500%,#c0a16b_82%,#c2a268_87%,#c09230_89%,#c49934_100%)]">
      <button aria-label="Пуск" className="flex w-[47px] shrink-0 items-center justify-center">
        <svg width="30" height="30" viewBox="0 0 30 30" fill="#fff"><path d="M1 5L12 3V14H1ZM13 3L29 1V14H13ZM1 15H12V27L1 25ZM13 15H29V29L13 27Z" /></svg>
      </button>
      <div className="flex max-w-[964px] flex-1 gap-[2px]">
        {apps.map((a) => (
          <button
            key={a.name}
            aria-label={a.name}
            className={
              a.active
                ? 'flex flex-1 items-center justify-center border border-[#ead6b2] bg-[#d7b787]'
                : a.open
                  ? 'flex flex-1 items-center justify-center border border-[#ffffff4d] bg-[#ffffff38]'
                  : 'flex flex-1 items-center justify-center'
            }
          >
            {a.icon}
          </button>
        ))}
      </div>
      <div className="ml-auto flex items-center text-[12px] text-white">
        <button aria-label="Клавиатура">
          <svg width="32" height="20" viewBox="0 0 32 20"><rect x="0.500" y="0.500" width="31" height="19" rx="1.500" fill="#fff" stroke="#57492e" /><path d="M4 4H28V16H4ZM4 8H28M4 12H28M8 4V16M12 4V12M16 4V12M20 4V12M24 4V16" fill="none" stroke="#4b3d28" strokeWidth="1.200" /></svg>
        </button>
        <button aria-label="Скрытые значки" className="ml-[14px]">
          <svg width="8" height="5" viewBox="0 0 8 5"><path d="M0 5H8L4 0Z" fill="#fff" /></svg>
        </button>
        <svg className="ml-4" width="16" height="15" viewBox="0 0 16 15"><path d="M1.500 0.500V15" stroke="#fff" strokeWidth="2" /><path d="M3 2Q6 0 8 3L15 2Q15 8 12 9Q9 10 8 7L3 9Z" fill="#fff" stroke="#6c5a34" strokeWidth=".5" /></svg>
        <svg className="ml-2" width="15" height="12" viewBox="0 0 15 12"><path d="M0 10H2V12H0ZM3 8H5V12H3ZM6 6H8V12H6ZM9 3H11V12H9Z" fill="#fff" /><path d="M12 0H15V12H12Z" fill="#8c7d59" /></svg>
        <svg className="ml-2" width="15" height="14" viewBox="0 0 15 14"><path d="M1 4.500H4L8 1V13L4 9.500H1Z" fill="#fff" stroke="#6c5a34" strokeWidth=".5" /><path d="M10 4Q12 7 10 10M12 1.500Q15.500 7 12 12.500" fill="none" stroke="#fff" strokeWidth="1.300" /></svg>
        <button className="ml-[14px] w-[25px] text-left">РУС</button>
        <div className="w-[88px] text-center leading-[17px]">
          <div>22:38</div>
          <div>26.02.2017</div>
        </div>
      </div>
    </div>
  )
}

function App() {
  return (
    <div className="flex h-screen flex-col overflow-hidden bg-white font-['Open_Sans','Noto_Sans',sans-serif]">
      <TitleBar />
      <Tabs />
      <Ribbon />
      <Workspace />
      <StatusBar />
      <Taskbar />
    </div>
  )
}

export default App
